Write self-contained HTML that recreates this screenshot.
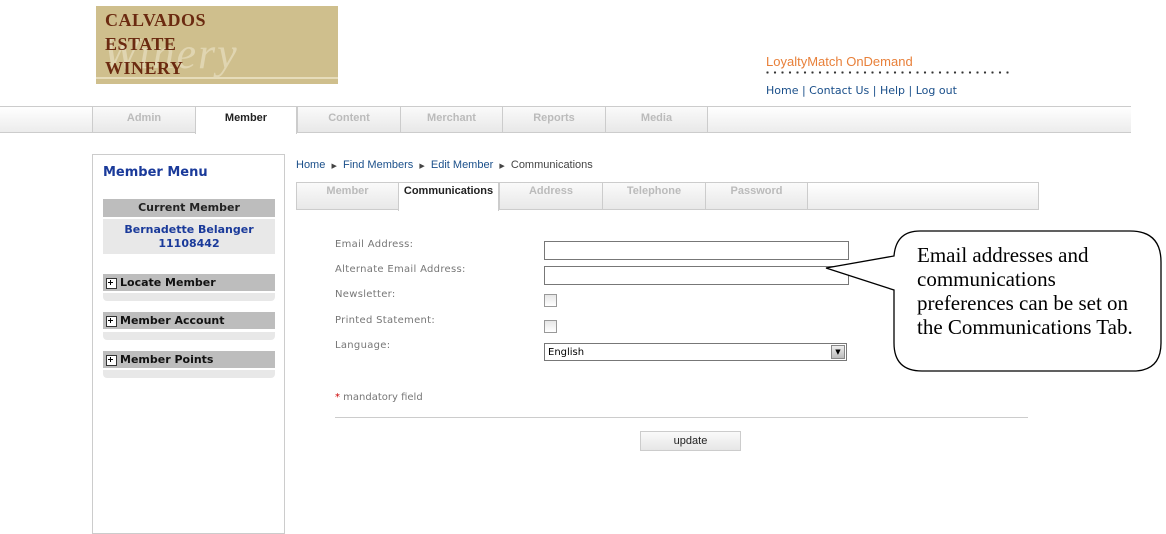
<!DOCTYPE html>
<html><head><meta charset="utf-8"><style>
*{margin:0;padding:0;box-sizing:border-box}
body{width:1166px;height:529px;background:#fff;position:relative;overflow:hidden;font-family:"Liberation Sans",Verdana,sans-serif;}
.a{position:absolute}
.logo{left:96px;top:6px;width:242px;height:78px;background:#cfbf8d;overflow:hidden}
.logo .t{position:absolute;left:9px;font-family:"Liberation Serif",serif;font-weight:bold;font-size:18px;color:#6b2a10;letter-spacing:0.5px}
.tab{position:absolute;top:107px;height:25px;border-left:1px solid #ccc;background:linear-gradient(#fafafa,#e8e8e8);color:#bbb;font-size:11px;font-weight:bold;text-align:center;line-height:23px}
.stab{position:absolute;top:183px;height:26px;border-left:1px solid #ccc;background:linear-gradient(#fafafa,#e8e8e8);color:#bbb;font-size:11px;font-weight:bold;text-align:center;line-height:17px}
.lbl{position:absolute;left:335px;font-size:10px;color:#777;font-family:"DejaVu Sans",sans-serif;letter-spacing:0.3px}
.inp{position:absolute;left:544px;width:305px;height:19px;border:1px solid #777;background:#fff}
.cb{position:absolute;left:544px;width:13px;height:13px;border:1px solid #999;background:linear-gradient(#e6e6e6,#fff)}
.sh{position:absolute;left:103px;width:172px;height:17px;background:#bdbdbd;font-size:11px;font-weight:bold;color:#111;font-family:"DejaVu Sans",sans-serif;line-height:17px;padding-left:17px}
.sh:before{content:"";position:absolute;left:3px;top:4px;width:9px;height:9px;border:1px solid #333;background:#fff}
.sh i{position:absolute;left:5px;top:8px;width:5px;height:1px;background:#000}
.sh b{position:absolute;left:7px;top:6px;width:1px;height:5px;background:#000}
.sf{position:absolute;left:103px;width:172px;height:8px;background:#e8e8e8;border-radius:0 0 4px 4px}
</style></head><body>
<div class="a logo">
<div class="a" style="left:0;top:71px;width:242px;height:2px;background:#e6dcba"></div>
<div class="a" style="left:6px;top:22px;font-family:'Liberation Serif',serif;font-style:italic;font-size:44px;color:#e4dab8;opacity:.85;letter-spacing:2px">Winery</div>
<div class="t" style="top:4px">CALVADOS</div>
<div class="t" style="top:28px">ESTATE</div>
<div class="t" style="top:52px">WINERY</div>
</div>
<div class="a" style="left:766px;top:54px;font-size:13px;color:#e8803a">LoyaltyMatch OnDemand</div>
<div class="a" style="left:766px;top:71px;width:246px;height:3px;background:radial-gradient(circle at 1.5px 1.5px,#333 1px,transparent 1.3px);background-size:7.5px 3px"></div>
<div class="a" style="left:766px;top:84px;font-size:11px;color:#1a4f8a;font-family:'DejaVu Sans',sans-serif">Home | Contact Us | Help | Log out</div>
<div class="a" style="left:0;top:106px;width:1131px;height:27px;border-top:1px solid #ccc;border-bottom:1px solid #ccc;background:linear-gradient(#fff,#ececec)"></div>
<div class="tab" style="left:92px;width:103px">Admin</div>
<div class="tab" style="left:195px;width:102px;background:#fff;color:#222;height:27px;border-right:1px solid #ccc">Member</div>
<div class="tab" style="left:297px;width:103px">Content</div>
<div class="tab" style="left:400px;width:102px">Merchant</div>
<div class="tab" style="left:502px;width:103px">Reports</div>
<div class="tab" style="left:605px;width:103px;border-right:1px solid #ccc">Media</div>

<div class="a" style="left:92px;top:154px;width:193px;height:380px;border:1px solid #ccc"></div>
<div class="a" style="left:103px;top:165px;font-size:13px;font-weight:bold;color:#1a3a9a;font-family:'DejaVu Sans',sans-serif">Member Menu</div>
<div class="a" style="left:103px;top:199px;width:172px;height:18px;background:#bdbdbd;font-size:11px;font-weight:bold;text-align:center;line-height:18px;font-family:'DejaVu Sans',sans-serif;color:#222">Current Member</div>
<div class="a" style="left:103px;top:219px;width:172px;height:35px;background:#e8e8e8;font-size:11px;font-weight:bold;text-align:center;line-height:14px;padding-top:4px;font-family:'DejaVu Sans',sans-serif;color:#1a3a9a">Bernadette Belanger<br>11108442</div>
<div class="sh" style="top:274px"><i></i><b></b>Locate Member</div><div class="sf" style="top:293px"></div>
<div class="sh" style="top:312px"><i></i><b></b>Member Account</div><div class="sf" style="top:332px"></div>
<div class="sh" style="top:351px"><i></i><b></b>Member Points</div><div class="sf" style="top:370px"></div>

<div class="a" style="left:296px;top:159px;font-size:11px;color:#1a4f8a">Home &nbsp;<span style="font-size:7px;color:#444">▶</span>&nbsp; Find Members &nbsp;<span style="font-size:7px;color:#444">▶</span>&nbsp; Edit Member &nbsp;<span style="font-size:7px;color:#444">▶</span>&nbsp; <span style="color:#444">Communications</span></div>
<div class="a" style="left:296px;top:182px;width:743px;height:28px;border:1px solid #ccc;background:linear-gradient(#fff,#ececec)"></div>
<div class="stab" style="left:296px;width:102px">Member</div>
<div class="stab" style="left:398px;width:101px;background:#fff;color:#222;height:28px;border-right:1px solid #ccc">Communications</div>
<div class="stab" style="left:499px;width:103px">Address</div>
<div class="stab" style="left:602px;width:103px">Telephone</div>
<div class="stab" style="left:705px;width:103px;border-right:1px solid #ccc">Password</div>

<div class="lbl" style="top:239px">Email Address:</div>
<div class="lbl" style="top:264px">Alternate Email Address:</div>
<div class="lbl" style="top:289px">Newsletter:</div>
<div class="lbl" style="top:315px">Printed Statement:</div>
<div class="lbl" style="top:340px">Language:</div>
<div class="inp" style="top:241px"></div>
<div class="inp" style="top:266px"></div>
<div class="cb" style="top:294px"></div>
<div class="cb" style="top:320px"></div>
<div class="inp" style="top:343px;width:303px;height:18px;font-size:10px;font-family:'DejaVu Sans',sans-serif;padding:3px 0 0 3px;color:#000">English
<div class="a" style="right:1px;top:1px;width:14px;height:14px;background:linear-gradient(#eee,#bbb);border:1px solid #888;font-size:7px;text-align:center;line-height:12px">▼</div></div>
<div class="a" style="left:335px;top:392px;font-size:10px;color:#777;font-family:'DejaVu Sans',sans-serif"><span style="color:#c00">*</span> mandatory field</div>
<div class="a" style="left:335px;top:417px;width:693px;height:1px;background:#ccc"></div>
<div class="a" style="left:640px;top:431px;width:101px;height:20px;border:1px solid #ccc;background:linear-gradient(#fafafa,#e6e6e6);font-size:11px;text-align:center;line-height:18px;color:#222">update</div>

<svg class="a" style="left:0;top:0" width="1166" height="529">
<path d="M920,231 L1130,231 Q1161,231 1161,262 L1161,343 Q1161,371 1133,371 L922,371 Q894,371 894,343 L894,290 L826,268 L894,256 Q896,231 920,231 Z" fill="#fff" stroke="#000" stroke-width="1.3"/>
</svg>
<div class="a" style="left:917px;top:243px;font-family:'Liberation Serif',serif;font-size:21px;line-height:24px;color:#000;white-space:nowrap">Email addresses and<br>communications<br>preferences can be set on<br>the Communications Tab.</div>
</body></html>
